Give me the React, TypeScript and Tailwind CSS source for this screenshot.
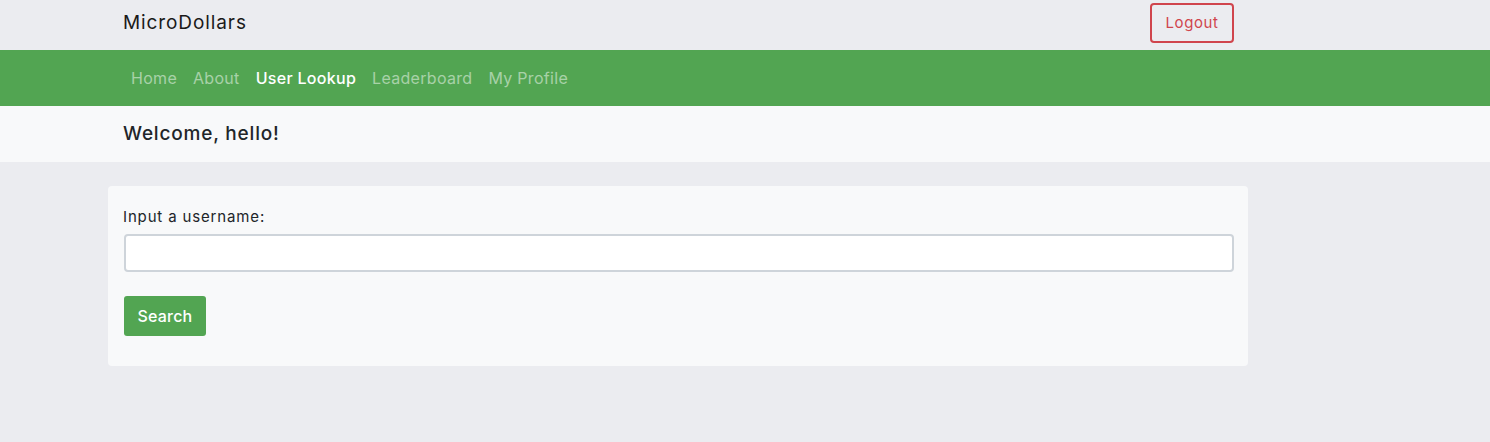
export default function App() {
  const links = ["Home", "About", "User Lookup", "Leaderboard", "My Profile"];
  return (
    <div className="min-h-[442px] w-full bg-[#ebecf0] font-['Inter',sans-serif] text-[#212529]">
      <div className="flex h-[50px] items-center pl-[123px] pr-[256px]">
        <div className="mt-[-3px] text-[19px] tracking-[0.9px] text-[#1a1a1a]">MicroDollars</div>
        <button className="ml-auto mt-[-5px] h-[40px] w-[84px] rounded-[4px] border-2 border-[#d0454d] pt-[1px] text-[15px] tracking-[0.6px] text-[#d0454d]">
          Logout
        </button>
      </div>
      <nav className="flex h-[56px] items-center bg-[#52a552] pl-[123px]">
        {links.map((l) => (
          <span
            key={l}
            className={
              "px-[8px] text-[16px] tracking-[0.3px] " +
              (l === "User Lookup" ? "font-medium text-white" : "text-white/50")
            }
          >
            {l}
          </span>
        ))}
      </nav>
      <div className="flex h-[56px] items-center bg-[#f8f9fa] pl-[123px]">
        <h1 className="text-[19px] font-medium tracking-[0.8px] text-[#212529]">Welcome, hello!</h1>
      </div>
      <div className="ml-[108px] mt-[24px] w-[1140px] rounded-[4px] bg-[#f8f9fa] px-[16px] pb-[30px] pt-[20px]">
        <label className="ml-[-1px] block text-[15px] tracking-[0.85px] text-[#212529]">Input a username:</label>
        <input className="mt-[5px] block h-[38px] w-[1110px] rounded-[4px] border-2 border-[#ced4da] bg-white" />
        <button className="mt-[24px] h-[40px] w-[82px] rounded-[3px] bg-[#52a552] text-[16px] font-medium tracking-[0.2px] text-white">
          Search
        </button>
      </div>
    </div>
  );
}
